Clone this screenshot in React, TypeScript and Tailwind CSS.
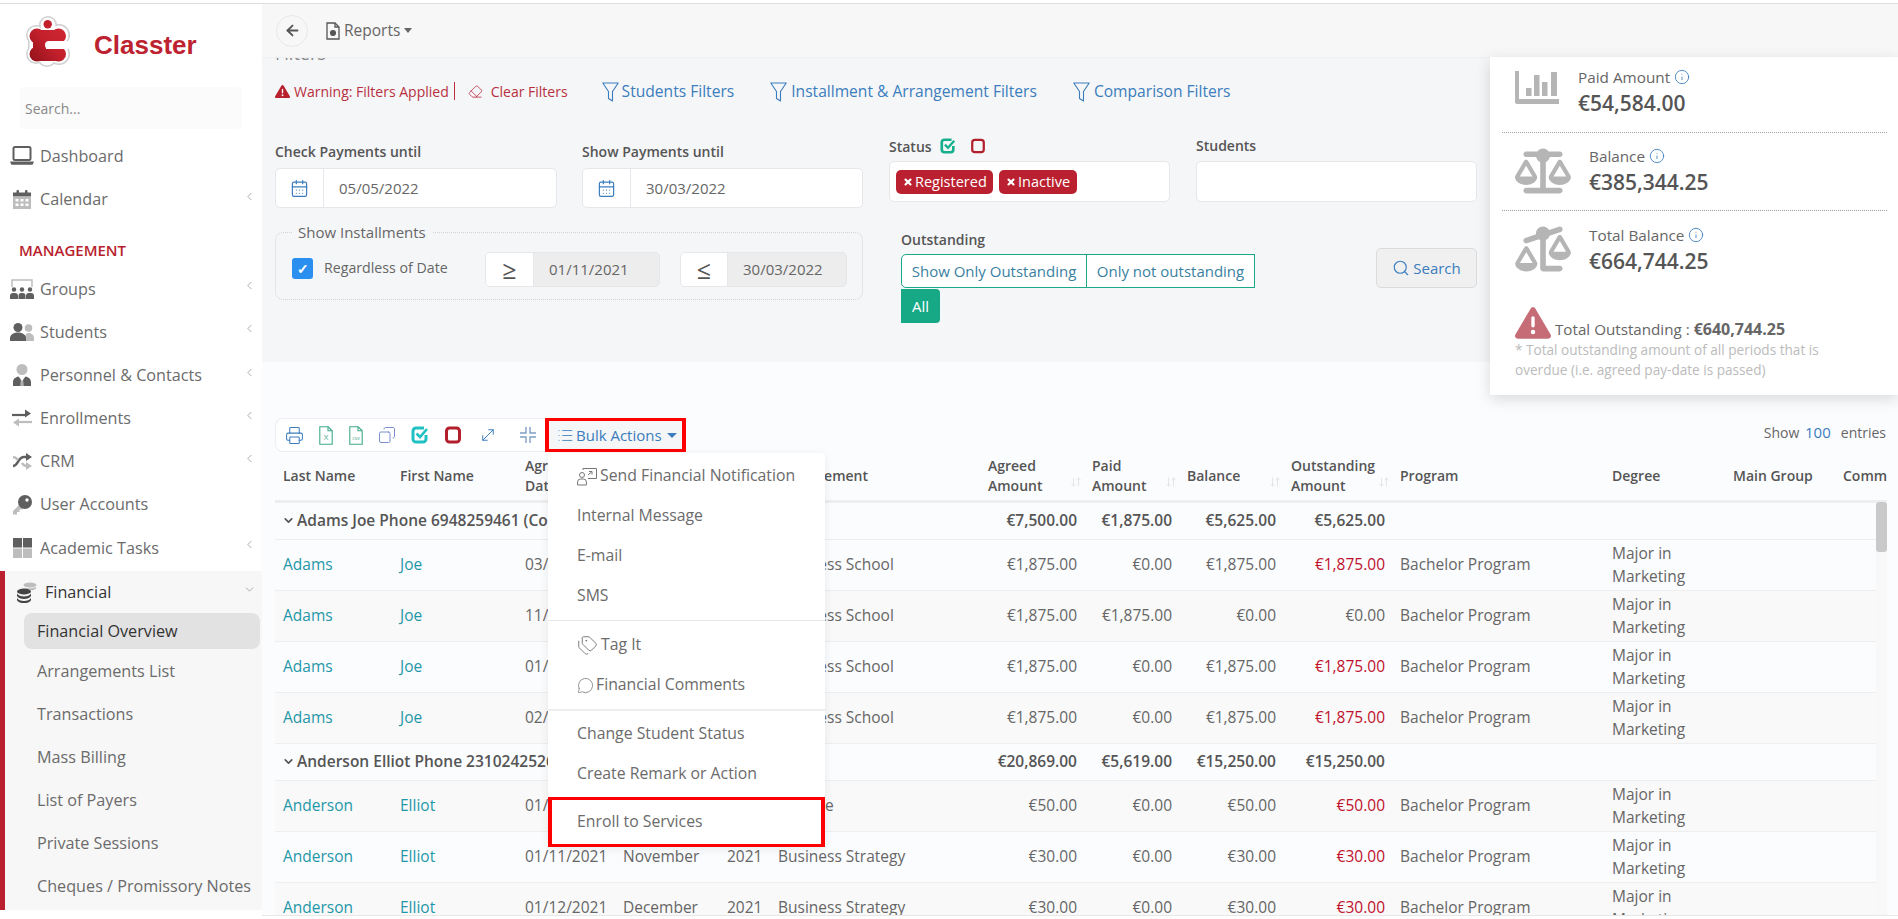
import React from "react";
import {
  ArrowLeft, ArrowDownUp, CalendarDays, ChevronDown, ChevronLeft, Copy, Eraser, Info,
  List, MessageCircle, MoveDiagonal, Printer, Search, Tags, X,
} from "lucide-react";
import { FaScaleBalanced, FaScaleUnbalanced, FaTriangleExclamation } from "react-icons/fa6";

const D = "#5f5f5f";
const L = "#bdbdbd";

const Logo = () => (
  <svg width="45" height="51" viewBox="0 0 45 51">
    <defs>
      <linearGradient id="lg" gradientUnits="userSpaceOnUse" x1="2" y1="46" x2="40" y2="12">
        <stop offset="0" stopColor="#8d1119" />
        <stop offset="0.55" stopColor="#c3202c" />
        <stop offset="1" stopColor="#d02733" />
      </linearGradient>
    </defs>
    <g fill="#cfcfcf">
      <circle cx="22" cy="9" r="9" /><circle cx="10" cy="19" r="10" /><circle cx="33" cy="19" r="11" />
      <circle cx="10" cy="38" r="10" /><circle cx="33" cy="38" r="11" /><circle cx="21" cy="41" r="10" />
      <rect x="2" y="14" width="32" height="28" />
    </g>
    <g fill="#fff">
      <circle cx="22" cy="9" r="7.500" /><circle cx="10" cy="19" r="8.500" /><circle cx="33" cy="19" r="9.500" />
      <circle cx="10" cy="38" r="8.500" /><circle cx="33" cy="38" r="9.500" /><circle cx="21" cy="41" r="8.500" />
      <rect x="3.500" y="14" width="32" height="28" />
    </g>
    <circle cx="21.700" cy="8.300" r="4.200" fill="#c3202c" />
    <g fill="url(#lg)">
      <circle cx="11" cy="20" r="7.500" /><circle cx="32.500" cy="20" r="7.500" />
      <circle cx="11" cy="38" r="7.500" /><circle cx="32.500" cy="38" r="7.500" />
      <rect x="11" y="14" width="21" height="12" />
      <rect x="11" y="33" width="21" height="12" />
      <rect x="7" y="20" width="13" height="18" />
    </g>
    <rect x="19" y="25" width="26" height="8" rx="4" fill="#fff" />
  </svg>
);

const Laptop = () => (
  <svg width="24" height="20" viewBox="0 0 24 20">
    <rect x="3.500" y="1" width="17" height="13" rx="1.500" fill="none" stroke={D} strokeWidth="2" />
    <path d="M0 15.500h24l-1 2.500a1 1 0 0 1-1 .8H2a1 1 0 0 1-1-.8z" fill={D} />
  </svg>
);
const Cal = () => (
  <svg width="18" height="20" viewBox="0 0 18 20">
    <path d="M0 3.500h18v4H0z" fill={D} />
    <rect x="3.500" y="1" width="2.500" height="4" rx="1" fill={D} />
    <rect x="12" y="1" width="2.500" height="4" rx="1" fill={D} />
    <path d="M0 8h18v12H0zM2.500 10v2.500h3V10zm5 0v2.500h3V10zm5 0v2.500h3V10zm-10 4.500V17h3v-2.500zm5 0V17h3v-2.500zm5 0V17h3v-2.500z" fill={L} fillRule="evenodd" />
  </svg>
);
const Groups = () => (
  <svg width="24" height="20" viewBox="0 0 24 20">
    <path d="M2 8V1h20v7" fill="none" stroke={L} strokeWidth="1.500" />
    <g fill={D}>
      <circle cx="4" cy="10.500" r="2.200" /><circle cx="12" cy="10.500" r="2.200" /><circle cx="20" cy="10.500" r="2.200" />
      <path d="M0 20v-3a3 3 0 0 1 3-3h2a3 3 0 0 1 3 3v3zM8.500 20v-3a3 3 0 0 1 3-3h1a3 3 0 0 1 3 3v3zM16 20v-3a3 3 0 0 1 3-3h2a3 3 0 0 1 3 3v3z" />
    </g>
  </svg>
);
const Students = () => (
  <svg width="24" height="18" viewBox="0 0 24 18">
    <circle cx="18.500" cy="5" r="3.800" fill={L} />
    <path d="M15 18v-3c0-3 1-5 3.500-5s5.500 2 5.500 5v3z" fill={L} />
    <circle cx="8" cy="4.500" r="4.500" fill={D} />
    <path d="M0 18v-3c0-3 3-5.500 8-5.500s8 2.500 8 5.500v3z" fill={D} />
  </svg>
);
const Person = () => (
  <svg width="18" height="22" viewBox="0 0 18 22">
    <circle cx="9" cy="5.500" r="5.500" fill={L} />
    <path d="M0 22v-4c0-3 2.500-5 5.500-5.500L9 17l3.500-4.500c3 .5 5.500 2.500 5.500 5.500v4z" fill={D} />
    <path d="M8 14h2l.8 8H7.200z" fill="#fff" opacity=".5" />
  </svg>
);
const Swap = () => (
  <svg width="20" height="18" viewBox="0 0 20 18">
    <path d="M0 6h15" stroke={D} strokeWidth="2.200" />
    <path d="M13 1l6 5-6 5z" fill={D} transform="translate(0 -1) scale(1 .8) translate(0 1)" />
    <path d="M20 13H5" stroke={L} strokeWidth="2.200" />
    <path d="M7 8l-6 5 6 5z" fill={L} transform="translate(0 3) scale(1 .8)" />
  </svg>
);
const Shuffle = () => (
  <svg width="20" height="17" viewBox="0 0 20 17">
    <path d="M1 13c5 0 5-9 11-9h3" fill="none" stroke={D} strokeWidth="2.500" />
    <path d="M14 0l6 4-6 4z" fill={D} />
    <path d="M1 4c3 0 4 2 5 3M10 10c1 2 2 3 5 3" fill="none" stroke={L} strokeWidth="2.500" />
    <path d="M14 9l6 4-6 4z" fill={L} />
  </svg>
);
const KeyIcon = () => (
  <svg width="20" height="20" viewBox="0 0 20 20">
    <path d="M8 9L1 16v3.500h4V17h2.500v-2.500H10l2-2z" fill={L} />
    <path d="M13 0a7 7 0 1 1-7 7 7 7 0 0 1 7-7z" fill={D} />
    <circle cx="15" cy="5" r="1.700" fill="#fff" />
  </svg>
);
const Grid4 = () => (
  <svg width="19" height="20" viewBox="0 0 19 20">
    <rect width="9" height="9.500" fill={D} /><rect x="10" width="9" height="9.500" fill={D} />
    <rect y="10.500" width="9" height="9.500" fill={L} /><rect x="10" y="10.500" width="9" height="9.500" fill={L} />
  </svg>
);
const Coins = () => (
  <svg width="20" height="21" viewBox="0 0 20 21">
    <ellipse cx="13" cy="3" rx="6.500" ry="2.500" fill={L} />
    <path d="M7 5.500c2 1.200 8 1.200 12-.5v1.500c-2 2-6 2-8 1.500z" fill={L} />
    <g fill="#444">
      <ellipse cx="7" cy="9.500" rx="7" ry="3" />
      <path d="M0 11.500c1 2 4 3 7 3s6-1 7-3V14c-1 2-4 3-7 3s-6-1-7-3z" />
      <path d="M0 16c1 2 4 3 7 3s6-1 7-3v2.200c-1 2-4 2.800-7 2.800s-6-.8-7-2.800z" />
    </g>
  </svg>
);
const Funnel = () => (
  <svg width="17" height="20" viewBox="0 0 17 20" fill="none" stroke="#3b7dbd" strokeWidth="1.100" strokeLinejoin="round">
    <path d="M.8 1h15.400L10.500 9.500V19l-4-2.500v-7z" />
  </svg>
);
const PaidChart = () => (
  <svg width="44" height="33" viewBox="0 0 44 33" fill="#b5b5b5">
    <path d="M0 0h4v28h40v5H2a2 2 0 0 1-2-2z" />
    <rect x="11" y="17" width="5.500" height="8" /><rect x="19" y="4" width="5.500" height="21" />
    <rect x="27" y="11" width="5.500" height="14" /><rect x="36" y="1" width="6" height="24" />
  </svg>
);
const CheckBox2 = ({ color, size = 18 }: { color: string; size?: number }) => (
  <svg width={size} height={size} viewBox="0 0 18 18" fill="none">
    <path d="M15 9v4a3 3 0 0 1-3 3H5a3 3 0 0 1-3-3V5a3 3 0 0 1 3-3h8" stroke={color} strokeWidth="3" />
    <path d="M5.500 7.500L9 11l7-8" stroke={color} strokeWidth="2.600" />
  </svg>
);
const Stop = ({ size = 18, w = 3 }: { size?: number; w?: number }) => (
  <svg width={size} height={size} viewBox="0 0 18 18" fill="none">
    <rect x="2.500" y="2" width="13" height="14" rx="3" stroke="#b21f2d" strokeWidth={w} />
  </svg>
);
const FileDoc = ({ label, color }: { label: string; color: string }) => (
  <svg width="14" height="19" viewBox="0 0 14 19" fill="none">
    <path d="M.8.8h8.400l4 4v13.400H.8z" stroke={color} strokeWidth="1.100" />
    <path d="M9 .8v4h4" stroke={color} strokeWidth="1.100" />
    <text x="7" y="14" textAnchor="middle" fontSize={label.length > 1 ? 5 : 8} fill={color} fontFamily="Open Sans">{label}</text>
  </svg>
);
const Compress = () => (
  <svg width="18" height="18" viewBox="0 0 18 18" fill="none" stroke="#7ea0c4" strokeWidth="1.400">
    <path d="M7 1v6H1M11 1v6h6M7 17v-6H1M11 17v-6h6" />
  </svg>
);
const ReportIcon = () => (
  <svg width="14" height="18" viewBox="0 0 14 18" fill="none" stroke="#555" strokeWidth="1.300">
    <path d="M1 1h8l4 4v12H1z" />
    <path d="M9 1v4h4" />
    <circle cx="7" cy="11" r="2.400" fill="#555" />
  </svg>
);
const BoardPerson = () => (
  <svg width="20" height="19" viewBox="0 0 20 19" fill="none" stroke="#777" strokeWidth="1">
    <path d="M6 3V1.500h13.500v10H11" />
    <path d="M11 8l3.500-3M12 4.500h3v3" />
    <circle cx="5" cy="8" r="2.500" />
    <path d="M.6 18v-3a3 3 0 0 1 3-3h2.800a3 3 0 0 1 3 3v3z" />
  </svg>
);

const nav1 = [
  { t: "Dashboard", i: <Laptop /> },
  { t: "Calendar", i: <Cal />, c: true },
];
const nav2 = [
  { t: "Groups", i: <Groups />, c: true },
  { t: "Students", i: <Students />, c: true },
  { t: "Personnel & Contacts", i: <Person />, c: true },
  { t: "Enrollments", i: <Swap />, c: true },
  { t: "CRM", i: <Shuffle />, c: true },
  { t: "User Accounts", i: <KeyIcon /> },
  { t: "Academic Tasks", i: <Grid4 />, c: true },
];
const sub = ["Arrangements List", "Transactions", "Mass Billing", "List of Payers", "Private Sessions", "Cheques / Promissory Notes"];

const NavItem = ({ t, i, c }: { t: string; i: React.ReactNode; c?: boolean }) => (
  <div className="flex h-[43.2px] items-center pl-[10px] pr-[6px] text-[16.200px] text-[#6b6b6b]">
    <span className="flex w-[30px] shrink-0 justify-center pr-[6px]">{i}</span>
    <span className="flex-1">{t}</span>
    {c && <ChevronLeft size={13} strokeWidth={1.500} className="mb-[6px] text-[#999]" />}
  </div>
);

const Sidebar = () => (
  <aside className="flex w-[262px] shrink-0 flex-col bg-white">
    <div className="flex h-[83px] items-start pl-[26px] pt-[12px]">
      <Logo />
      <span className="ml-[23px] mt-[13px] font-['Liberation_Sans',sans-serif] text-[26px] font-bold leading-[32px] text-[#bd2230]">Classter</span>
    </div>
    <div className="mx-[20px] flex h-[42px] items-center rounded bg-[#fbfbfb] pl-[5px] text-[14px] text-[#888]">Search...</div>
    <div className="mt-[5.400px]">
      {nav1.map((n) => <NavItem key={n.t} {...n} />)}
    </div>
    <div className="h-[46.300px] pl-[19px] pt-[19px] text-[15px] font-semibold leading-[21px] text-[#b81f2e]">MANAGEMENT</div>
    {nav2.map((n) => <NavItem key={n.t} {...n} />)}
    <div className="mt-[1.700px] h-[339px] border-l-[5px] border-[#bb2030] bg-[#f7f7f7] text-[16.200px]">
      <div className="flex h-[42px] items-center pl-[12px] pr-[6px] text-[#333]">
        <span className="w-[28px]"><Coins /></span>
        <span className="flex-1">Financial</span>
        <ChevronDown size={13} strokeWidth={1.500} className="mb-[6px] text-[#999]" />
      </div>
      <div className="ml-[19px] mr-[2px] flex h-[36px] items-center rounded-lg bg-[#e2e2e2] pl-[13px] text-[#333]">Financial Overview</div>
      {sub.map((s) => (
        <div key={s} className="flex h-[43.2px] items-center pl-[32px] text-[#6b6b6b]">{s}</div>
      ))}
    </div>
  </aside>
);

const DateGroup = ({ value, w }: { value: string; w: string }) => (
  <div className={`flex h-[40px] items-center rounded-[5px] border border-[#e5e7eb] bg-white ${w}`}>
    <span className="flex h-full w-[48px] items-center justify-center border-r border-[#e5e7eb]">
      <CalendarDays size={19} strokeWidth={1.500} className="text-[#3b7dbd]" />
    </span>
    <span className="pl-[15px] text-[15px] text-[#666]">{value}</span>
  </div>
);

const Compare = ({ sym, value, w, addon }: { sym: string; value: string; w: string; addon: string }) => (
  <div className={`flex h-[35px] overflow-hidden rounded-[5px] border border-[#e5e7eb] bg-[#ededed] ${w}`}>
    <span className={`flex items-center justify-center border-r border-[#e5e7eb] bg-white text-[25px] leading-none text-[#555] ${addon}`}>{sym}</span>
    <span className="flex items-center pl-[15px] text-[15px] text-[#666]">{value}</span>
  </div>
);

const Tag = ({ t, w }: { t: string; w: string }) => (
  <span className={`flex h-[24px] items-center rounded-[5px] bg-[#bb2030] pl-[7px] text-[14.500px] text-white ${w}`}>
    <X size={10} strokeWidth={5} className="mr-[2px]" />{t}
  </span>
);

const Filters = () => (
  <section className="h-[305px] shrink-0 overflow-hidden border-t border-[#efefef] bg-[#f5f6f8] px-[13px]">
    <div className="-mt-[15px] h-[20px] text-[18px] leading-[20px] text-[#888]">Filters</div>
    <div className="mt-[16px] flex h-[24px] items-center text-[14px]">
      <FaTriangleExclamation size={15} className="text-[#b8202e]" />
      <span className="ml-[4px] text-[#b8303f]">Warning: Filters Applied</span>
      <span className="ml-[5px] h-[18px] w-px bg-[#b8303f]" />
      <Eraser size={15} strokeWidth={1.300} className="ml-[13px] text-[#b8303f]" />
      <span className="ml-[8px] text-[#b8303f]">Clear Filters</span>
      <span className="ml-[34px] mt-[2px] flex items-center gap-[3px] text-[15.600px] text-[#3b7dbd]"><Funnel />Students Filters</span>
      <span className="ml-[36px] mt-[2px] flex items-center gap-[4px] text-[15.600px] text-[#3b7dbd]"><Funnel />Installment &amp; Arrangement Filters</span>
      <span className="ml-[36px] mt-[2px] flex items-center gap-[4px] text-[15.600px] text-[#3b7dbd]"><Funnel />Comparison Filters</span>
    </div>
    <div className="mt-[32px] flex">
      <div className="w-[588px] pt-[7px]">
        <div className="flex gap-[25px]">
          <div className="w-[282px]">
            <div className="text-[14px] font-semibold leading-[20px] text-[#555]">Check Payments until</div>
            <div className="mt-[6px]"><DateGroup value="05/05/2022" w="w-full" /></div>
          </div>
          <div className="w-[281px]">
            <div className="text-[14px] font-semibold leading-[20px] text-[#555]">Show Payments until</div>
            <div className="mt-[6px]"><DateGroup value="30/03/2022" w="w-full" /></div>
          </div>
        </div>
        <fieldset className="mt-[14px] h-[78px] rounded-lg border border-dotted border-[#d0d3d8] pl-[16px]">
          <legend className="px-[6px] text-[15px] leading-[20px] text-[#666]">Show Installments</legend>
          <div className="flex items-center pt-[10px]">
            <span className="mb-[2px] flex h-[21px] w-[21px] items-center justify-center rounded-[3px] bg-[#2b8ff0] text-[14px] font-bold leading-none text-white">✓</span>
            <span className="mb-[4px] ml-[11px] w-[125px] whitespace-nowrap text-[14.200px] text-[#666]">Regardless of Date</span>
            <div className="ml-[36px]"><Compare sym="≥" value="01/11/2021" w="w-[175px]" addon="w-[48px]" /></div>
            <div className="ml-[20px]"><Compare sym="≤" value="30/03/2022" w="w-[167px]" addon="w-[47px]" /></div>
          </div>
        </fieldset>
      </div>
      <div className="mt-[1px] ml-[26px] w-[588px]">
        <div className="flex gap-[26px]">
          <div className="w-[281px]">
            <div className="flex h-[20px] items-center text-[14px] font-semibold text-[#555]">
              Status
              <span className="ml-[8px]"><CheckBox2 color="#17b08e" size={16} /></span>
              <span className="ml-[14px]"><Stop size={16} w={2.500} /></span>
            </div>
            <div className="mt-[5px] flex h-[41px] items-center gap-[6px] rounded-[5px] border border-[#e5e7eb] bg-white pl-[6px]">
              <Tag t="Registered" w="w-[97px]" />
              <Tag t="Inactive" w="w-[78px]" />
            </div>
          </div>
          <div className="w-[281px]">
            <div className="text-[14px] font-semibold leading-[20px] text-[#555]">Students</div>
            <div className="mt-[5px] h-[41px] rounded-[5px] border border-[#e5e7eb] bg-white" />
          </div>
        </div>
        <div className="mt-[28px] flex items-start">
          <div className="ml-[12px]">
            <div className="text-[14px] font-semibold leading-[20px] text-[#555]">Outstanding</div>
            <div className="mt-[4px] flex h-[34px] text-[15px] text-[#3a7f9f]">
              <span className="flex w-[186px] items-center justify-center rounded-l-[5px] border border-[#1aa88a] bg-white">Show Only Outstanding</span>
              <span className="-ml-px flex w-[169px] items-center justify-center border border-[#1aa88a] bg-white">Only not outstanding</span>
            </div>
            <div className="mt-px flex h-[34px] w-[39px] items-center justify-center rounded-r-[4px] bg-[#17a886] text-[15px] text-white">All</div>
          </div>
          <button className="ml-auto mt-[18px] flex h-[40px] w-[101px] items-center justify-center gap-[3px] rounded-[5px] border border-[#dcdcdc] bg-[#f0f0f0] text-[15px] text-[#3b7dbd]">
            <Search size={18} strokeWidth={1.500} />Search
          </button>
        </div>
      </div>
    </div>
  </section>
);

const SummaryRow = ({ icon, label, value, pt, iconTop, last, gap }: { icon: React.ReactNode; label: string; value: string; pt: string; iconTop: string; last?: boolean; gap: string }) => (
  <div className={`flex pl-[13px] ${pt} ${last ? "" : "border-b border-dotted border-[#9aa0a8]"}`}>
    <div className={`shrink-0 ${iconTop} ${gap}`}>{icon}</div>
    <div>
      <div className="flex h-[22px] items-center gap-[4px] text-[15.300px] text-[#666]">
        {label}<Info size={16} strokeWidth={1.300} className="text-[#3b7dbd]" />
      </div>
      <div className="h-[30px] text-[21px] font-semibold leading-[30px] text-[#555]">{value}</div>
    </div>
  </div>
);

const Card = () => (
  <div className="absolute right-0 top-[53px] z-10 h-[338px] w-[408px] bg-white pl-[12px] pr-[11px] shadow-[0_4px_14px_rgba(0,0,0,0.14)]">
    <SummaryRow pt="pt-[9px] h-[76px]" iconTop="mt-[5px]" gap="mr-[19px]" icon={<PaidChart />} label="Paid Amount" value="€54,584.00" />
    <SummaryRow pt="pt-[12px] h-[78px]" iconTop="-mt-[2px]" gap="mr-[18px]" icon={<FaScaleBalanced size={56} color="#b5b5b5" />} label="Balance" value="€385,344.25" />
    <SummaryRow last pt="pt-[13px] h-[65px]" iconTop="-mt-[3px]" gap="mr-[18px]" icon={<FaScaleUnbalanced size={56} color="#b5b5b5" />} label="Total Balance" value="€664,744.25" />
    <div className="mt-[32px] flex h-[31px] items-end pl-[13px] text-[15.200px] leading-[20px] text-[#666]">
      <FaTriangleExclamation size={36} className="-mb-[2px] text-[#c66c76]" />
      <span className="ml-[4px]">Total Outstanding : <span className="text-[16px] font-bold">€640,744.25</span></span>
    </div>
    <div className="ml-[13px] mt-px w-[330px] text-[13.600px] leading-[20px] text-[#bbbbbb]">* Total outstanding amount of all periods that is overdue (i.e. agreed pay-date is passed)</div>
  </div>
);

const menuCls = "flex h-[40px] items-center pl-[29px] text-[15.800px] text-[#6b6b6b]";

const BulkMenu = () => (
  <div className="absolute left-[-1px] top-[32px] z-20 w-[277px] rounded-t bg-white pt-[3px] shadow-[0_2px_10px_rgba(0,0,0,0.08)]">
    <div className={menuCls}><span className="mr-[3px]"><BoardPerson /></span>Send Financial Notification</div>
    <div className={menuCls}>Internal Message</div>
    <div className={menuCls}>E-mail</div>
    <div className={menuCls}>SMS</div>
    <div className="mb-[4px] mt-[4px] h-px bg-[#e8e8e8]" />
    <div className={menuCls}><Tags size={21} strokeWidth={1.100} className="mr-[3px] text-[#777]" />Tag It</div>
    <div className={menuCls}><MessageCircle size={17} strokeWidth={1.100} className="mr-[2px] text-[#777]" />Financial Comments</div>
    <div className="mb-[3px] mt-[4px] h-[2px] bg-[#eeeeee]" />
    <div className={menuCls}>Change Student Status</div>
    <div className={menuCls}>Create Remark or Action</div>
    <div className="mt-[3px] flex h-[50px] items-center border-x-4 border-y-[3px] border-[#ff0000] bg-white pl-[25px] text-[15.800px] text-[#6b6b6b]">Enroll to Services</div>
  </div>
);

const Toolbar = () => (
  <div className="flex h-[34px] items-center justify-between pr-[12px]">
    <div className="flex items-center">
      <div className="flex h-[34px] w-[271px] items-center rounded-l-lg border border-r-0 border-[#eceef2] bg-white">
        <Printer size={19} strokeWidth={1.300} className="ml-[9px] text-[#3b7dbd]" />
        <span className="ml-[15px]"><FileDoc label="X" color="#3fa98c" /></span>
        <span className="ml-[16px]"><FileDoc label="csv" color="#3fa98c" /></span>
        <span className="ml-[15px]"><Copy size={18} strokeWidth={1.200} className="-scale-x-100 text-[#6c82c8]" /></span>
        <span className="ml-[15px]"><CheckBox2 color="#1fc1c3" /></span>
        <span className="ml-[15px]"><Stop /></span>
        <MoveDiagonal size={18} strokeWidth={1.300} className="ml-[17px] text-[#3b7dbd]" />
        <span className="ml-[22px]"><Compress /></span>
      </div>
      <div className="relative -ml-px flex h-[34px] w-[141px] items-center border-x-4 border-y-[3px] border-[#ff0000] bg-[#f5f6f8] pl-[8px] text-[15px] text-[#3b7dbd]">
        <List size={17} strokeWidth={1.200} className="mr-[2px]" />Bulk Actions
        <span className="ml-[5px] h-0 w-0 border-x-[5px] border-t-[5px] border-x-transparent border-t-[#3b7dbd]" />
        <BulkMenu />
      </div>
    </div>
    <div className="z-0 mb-[5px] text-[14px] text-[#666]">Show <span className="ml-[2px] mr-[10px] text-[15px] text-[#3b7dbd]">100</span>entries</div>
  </div>
);

type Row = { l: string; f: string; d: string; m: string; y: string; a: string; ag: string; pa: string; b: string; o: string; red: boolean };
const adams: Row[] = [
  { l: "Adams", f: "Joe", d: "03/09/2021", m: "September", y: "2021", a: "Business School", ag: "€1,875.00", pa: "€0.00", b: "€1,875.00", o: "€1,875.00", red: true },
  { l: "Adams", f: "Joe", d: "11/10/2021", m: "October", y: "2021", a: "Business School", ag: "€1,875.00", pa: "€1,875.00", b: "€0.00", o: "€0.00", red: false },
  { l: "Adams", f: "Joe", d: "01/11/2021", m: "November", y: "2021", a: "Business School", ag: "€1,875.00", pa: "€0.00", b: "€1,875.00", o: "€1,875.00", red: true },
  { l: "Adams", f: "Joe", d: "02/12/2021", m: "December", y: "2021", a: "Business School", ag: "€1,875.00", pa: "€0.00", b: "€1,875.00", o: "€1,875.00", red: true },
];
const anderson: Row[] = [
  { l: "Anderson", f: "Elliot", d: "01/10/2021", m: "October", y: "2021", a: "Finance", ag: "€50.00", pa: "€0.00", b: "€50.00", o: "€50.00", red: true },
  { l: "Anderson", f: "Elliot", d: "01/11/2021", m: "November", y: "2021", a: "Business Strategy", ag: "€30.00", pa: "€0.00", b: "€30.00", o: "€30.00", red: true },
  { l: "Anderson", f: "Elliot", d: "01/12/2021", m: "December", y: "2021", a: "Business Strategy", ag: "€30.00", pa: "€0.00", b: "€30.00", o: "€30.00", red: true },
];

const td = "px-[8px] align-middle";
const tdR = "pl-[8px] pr-[7px] text-right align-middle";

const DataRow = ({ r, alt }: { r: Row; alt: boolean }) => (
  <tr className={`h-[51px] border-b border-[#eeeeee] ${alt ? "bg-[#f9f9f9]" : ""}`}>
    <td className={`${td} text-[#1f97a8]`}>{r.l}</td>
    <td className={`${td} text-[#1f97a8]`}>{r.f}</td>
    <td className={td}>{r.d}</td>
    <td className={td}>{r.m}</td>
    <td className={td}>{r.y}</td>
    <td className={td}>{r.a}</td>
    <td className={tdR}>{r.ag}</td>
    <td className={tdR}>{r.pa}</td>
    <td className={tdR}>{r.b}</td>
    <td className={`${tdR} ${r.red ? "text-[#c0112d]" : ""}`}>{r.o}</td>
    <td className={td}>Bachelor Program</td>
    <td className={`${td} leading-[22.500px]`}>Major in Marketing</td>
    <td className={td}></td>
    <td className={td}></td>
  </tr>
);

const GroupRow = ({ t, a, b, c, d, h }: { t: string; a: string; b: string; c: string; d: string; h: string }) => (
  <tr className={`border-b border-[#eeeeee] font-semibold text-[#555] ${h}`}>
    <td colSpan={6} className="whitespace-nowrap pl-[7px]">
      <span className="flex items-center gap-[2px]"><ChevronDown size={13} strokeWidth={3} />{t}</span>
    </td>
    <td className={tdR}>{a}</td>
    <td className={tdR}>{b}</td>
    <td className={tdR}>{c}</td>
    <td className={tdR}>{d}</td>
    <td colSpan={4}></td>
  </tr>
);

const th = "px-[8px] text-left align-middle font-semibold";
const Sort = ({ text }: { text: React.ReactNode }) => (
  <span className="flex items-center justify-between">
    <span>{text}</span>
    <ArrowDownUp size={12} strokeWidth={1.500} className="-mr-[6px] mt-[12px] text-[#dddddd]" />
  </span>
);

const DataTable = () => (
  <div className="relative min-h-0 flex-1 overflow-hidden">
    <table className="w-[1612px] table-fixed border-collapse text-[15.500px] text-[#666]">
      <colgroup>
        <col className="w-[117px]" /><col className="w-[125px]" /><col className="w-[98px]" /><col className="w-[104px]" />
        <col className="w-[51px]" /><col className="w-[210px]" /><col className="w-[104px]" /><col className="w-[95px]" />
        <col className="w-[104px]" /><col className="w-[109px]" /><col className="w-[212px]" /><col className="w-[121px]" />
        <col className="w-[110px]" /><col className="w-[52px]" />
      </colgroup>
      <thead className="text-[14px] leading-[20px] text-[#555]">
        <tr className="h-[49px] border-b-[3px] border-[#eeeeee]">
          <th className={th}>Last Name</th>
          <th className={th}>First Name</th>
          <th className={th}>Agreed Date</th>
          <th className={th}>Month</th>
          <th className={th}>Year</th>
          <th className={th}>Arrangement</th>
          <th className={th}><Sort text={<>Agreed<br />Amount</>} /></th>
          <th className={th}><Sort text={<>Paid<br />Amount</>} /></th>
          <th className={th}><Sort text="Balance" /></th>
          <th className={th}><Sort text={<>Outstanding<br />Amount</>} /></th>
          <th className={th}>Program</th>
          <th className={th}>Degree</th>
          <th className={th}>Main Group</th>
          <th className={`${th} whitespace-nowrap`}>Comm</th>
        </tr>
      </thead>
      <tbody>
        <GroupRow h="h-[38px]" t="Adams Joe Phone 6948259461 (Code: 1042)" a="€7,500.00" b="€1,875.00" c="€5,625.00" d="€5,625.00" />
        {adams.map((r, i) => <DataRow key={r.d} r={r} alt={i % 2 === 1} />)}
        <GroupRow h="h-[37px]" t="Anderson Elliot Phone 2310242526 (Code: 1043)" a="€20,869.00" b="€5,619.00" c="€15,250.00" d="€15,250.00" />
        {anderson.map((r, i) => <DataRow key={r.d} r={r} alt={i % 2 === 0} />)}
      </tbody>
    </table>
    <div className="absolute bottom-0 left-[1601px] top-[50px] w-[11px] bg-[#f8f8f8]">
      <div className="h-[50px] rounded-[3px] bg-[#c9c9c9]" />
    </div>
  </div>
);

export default function App() {
  return (
    <div className="flex h-[919px] w-full flex-col overflow-hidden bg-white pt-[3px] font-['Open_Sans',sans-serif]">
      <div className="h-px shrink-0 bg-[#dddddd]" />
      <div className="flex min-h-0 flex-1">
        <Sidebar />
        <main className="relative flex min-w-0 flex-1 flex-col bg-[#fbfcfe]">
          <header className="flex h-[53px] shrink-0 items-center bg-[#f7f7f7] pl-[14px]">
            <span className="flex h-[32px] w-[32px] items-center justify-center rounded-full border border-[#e8e8e8]">
              <ArrowLeft size={17} strokeWidth={2.600} className="text-[#555]" />
            </span>
            <span className="ml-[18px] flex items-center text-[15.500px] text-[#666]">
              <ReportIcon /><span className="ml-[4px]">Reports</span>
              <span className="ml-[4px] h-0 w-0 border-x-[4.500px] border-t-[5px] border-x-transparent border-t-[#666]" />
            </span>
          </header>
          <Filters />
          <Card />
          <div className="flex min-h-0 flex-1 flex-col pl-[13px] pt-[56px]">
            <Toolbar />
            <DataTable />
          </div>
          <div className="h-[4px] shrink-0 border-t border-[#e8e8e8] bg-white" />
        </main>
      </div>
    </div>
  );
}
